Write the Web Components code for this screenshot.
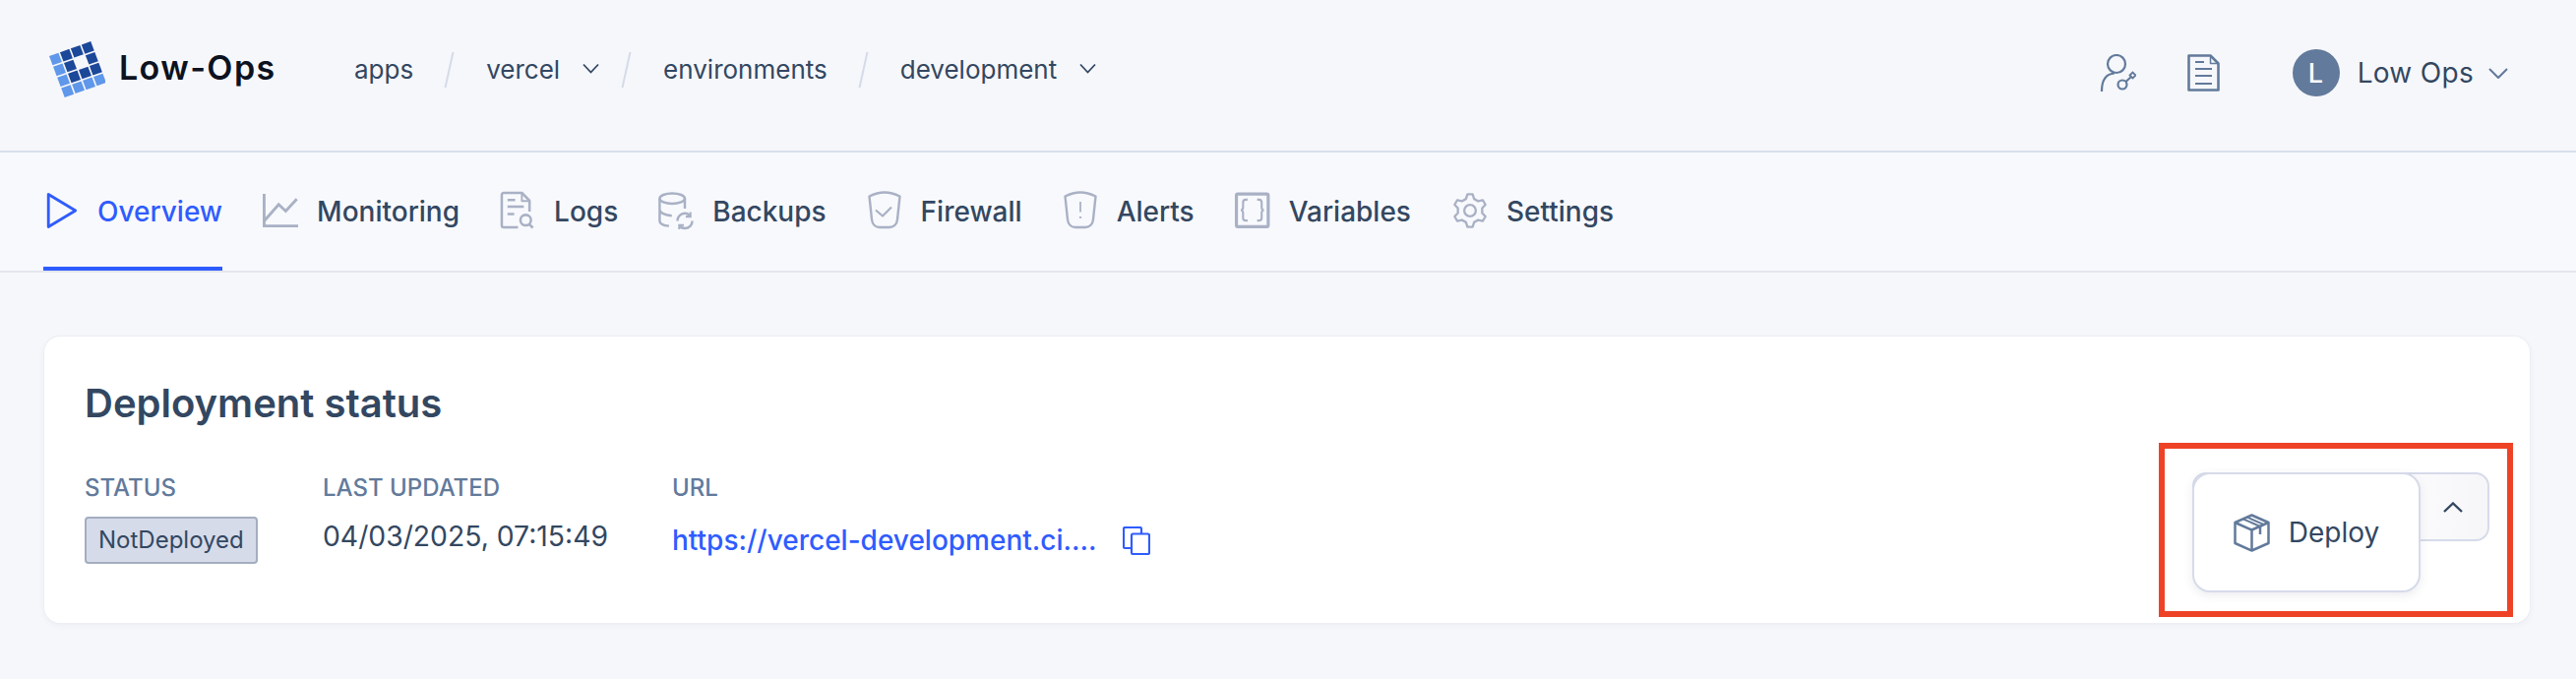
<!DOCTYPE html>
<html>
<head>
<meta charset="utf-8">
<style>
  html, body { margin: 0; background: #f6f7fb; }
  body { font-family: Inter, "Liberation Sans", sans-serif; color: #334761; }
  svg { display: block; }
</style>
</head>
<body>

<template id="lo-app-tpl">
  <style>
    :host { display: block; width: 2618px; height: 690px; overflow: hidden; position: relative; }
    main { padding: 65px 47px 0 45px; }
  </style>
  <slot name="header"></slot>
  <slot name="tabs"></slot>
  <main><slot></slot></main>
</template>

<template id="lo-header-tpl">
  <style>
    :host { display: flex; align-items: center; height: 153px; padding: 0 69px 0 49px; border-bottom: 2px solid #d8deeb; }
    .logo { display: flex; align-items: center; gap: 14px; width: 311px; font-weight: 600; font-size: 34px; color: #0c1220; letter-spacing: 1.400px; padding-bottom: 13px; }
    .crumbs { display: flex; align-items: center; flex: 1; padding-bottom: 12px; }
    .right { display: flex; align-items: center; padding-bottom: 5px; }
  </style>
  <div class="logo"><slot name="logo"></slot></div>
  <div class="crumbs"><slot name="crumbs"></slot></div>
  <div class="right"><slot name="right"></slot></div>
</template>

<template id="lo-crumb-tpl">
  <style>
    :host { display: flex; align-items: center; font-size: 26px; color: #334761; }
    .sep { width: 11px; height: 38px; margin: 0 32px 0 31px; }
    .chev { margin-left: 23px; margin-top: -2px; }
    :host(:not([menu])) .chev { display: none; }
    :host([menu]) .sep { margin-left: 22px; }
    :host([last]) .sep { display: none; }
  </style>
  <span><slot></slot></span>
  <svg class="chev" width="17" height="11" viewBox="0 0 17 11" fill="none" stroke="#334761" stroke-width="1.800"><path d="M1 1.500 8.500 9.500 16 1.500"/></svg>
  <svg class="sep" viewBox="0 0 11 38" fill="none" stroke="#d5dbe8" stroke-width="2"><path d="M9.500 1 1.500 37"/></svg>
</template>

<template id="lo-user-tpl">
  <style>
    :host { display: flex; align-items: center; font-size: 28px; letter-spacing: .3px; color: #334761; padding-left: 74px; }
    .av { width: 48px; height: 48px; border-radius: 50%; background: #627a9b; color: #fff; display: flex; align-items: center; justify-content: center; font-weight: 500; font-size: 27px; margin-right: 18px; }
    svg { margin-left: 15px; }
  </style>
  <div class="av">L</div>
  <span><slot></slot></span>
  <svg width="20" height="11" viewBox="0 0 20 11" fill="none" stroke="#627a9b" stroke-width="2"><path d="M1 1l9 9 9-9"/></svg>
</template>

<template id="lo-tabs-tpl">
  <style>
    :host { display: flex; gap: 41px; height: 120px; padding-left: 44px; border-bottom: 2px solid #e3e6ee; background: #f8f9fc; }
  </style>
  <slot></slot>
</template>

<template id="lo-tab-tpl">
  <style>
    :host { display: flex; align-items: center; gap: 19px; font-size: 28px; font-weight: 500; color: #334761; box-sizing: border-box; height: 120px; border-bottom: 4px solid transparent; }
    :host([active]) { color: #2f5cff; border-bottom-color: #2f5cff; }
    .ic { display: flex; width: 36px; padding-top: 2px; }
    span { padding-top: 4px; }
  </style>
  <div class="ic"><slot name="icon"></slot></div>
  <span><slot></slot></span>
</template>

<template id="lo-card-tpl">
  <style>
    :host { display: flex; justify-content: space-between; box-sizing: border-box; height: 291px; background: #fff; border-radius: 16px; padding: 46px 41px 0 41px; box-shadow: 0 0 0 1px #eceef4, 0 2px 6px rgba(60,70,100,.06); position: relative; }
    h2 { margin: 0 0 52px; font-size: 40px; line-height: 44px; font-weight: 600; color: #334761; }
    .fields { display: flex; }
    .actions { display: flex; margin-top: 92px; }
  </style>
  <div>
    <h2><slot name="title"></slot></h2>
    <div class="fields"><slot name="fields"></slot></div>
  </div>
  <div class="actions"><slot name="actions"></slot></div>
</template>

<template id="lo-field-tpl">
  <style>
    :host { display: block; }
    .lb { font-size: 24px; line-height: 24px; font-weight: 500; color: #627a9b; margin-bottom: 17px; }
    .val { display: flex; align-items: center; font-size: 28px; line-height: 32px; color: #334761; min-height: 48px; }
  </style>
  <div class="lb"><slot name="label"></slot></div>
  <div class="val"><slot></slot></div>
</template>

<template id="lo-badge-tpl">
  <style>
    :host { display: inline-block; box-sizing: border-box; height: 48px; line-height: 44px; padding: 0 12px; font-size: 24px; color: #334761; background: #d5dbe9; border: 2px solid #a4adc0; border-radius: 4px; }
  </style>
  <slot></slot>
</template>

<template id="lo-split-tpl">
  <style>
    :host { display: block; position: relative; width: 302px; height: 70px; }
    .toggle { position: absolute; inset: 0; box-sizing: border-box; border: 2px solid #d6dbea; border-radius: 14px; background: linear-gradient(90deg, #fff 55%, #f6f6f9); display: flex; align-items: center; justify-content: flex-end; padding-right: 25px; }
    .menu { position: absolute; left: 0; top: 0; width: 232px; height: 122px; box-sizing: border-box; border: 2px solid #d6dbea; border-radius: 18px; background: #fff; box-shadow: 0 3px 10px rgba(60,70,100,.1); display: flex; align-items: center; justify-content: center; gap: 19px; font-size: 28px; color: #334761; }
  </style>
  <div class="toggle">
    <svg width="20" height="11" viewBox="0 0 20 11" fill="none" stroke="#334761" stroke-width="2.400"><path d="M1 10l9-8.500 9 8.500"/></svg>
  </div>
  <div class="menu"><slot name="icon"></slot><span><slot></slot></span></div>
</template>

<template id="lo-mark-tpl">
  <style>
    :host { position: absolute; left: 2194px; top: 450px; width: 360px; height: 177px; box-sizing: border-box; border: 6px solid #ee4227; }
  </style>
</template>

<lo-app>
  <lo-header slot="header">
    <svg slot="logo" width="58" height="58" viewBox="0 0 58 58">
      <g transform="translate(1 16) rotate(-19.500) skewX(1)">
        <g fill="#5f97ea">
          <rect x="0" y="0" width="10" height="10"/><rect x="0" y="11.600" width="10" height="10"/><rect x="0" y="23.200" width="10" height="10"/><rect x="0" y="34.800" width="10" height="10"/>
          <rect x="11.600" y="34.800" width="10" height="10"/><rect x="23.200" y="34.800" width="10" height="10"/><rect x="34.800" y="34.800" width="10" height="10"/>
        </g>
        <g fill="#1c4899">
          <rect x="11.600" y="0" width="10" height="10"/><rect x="23.200" y="0" width="10" height="10"/><rect x="34.800" y="0" width="10" height="10"/>
          <rect x="11.600" y="11.600" width="10" height="10"/><rect x="34.800" y="11.600" width="10" height="10"/>
          <rect x="11.600" y="23.200" width="10" height="10"/><rect x="23.200" y="23.200" width="10" height="10"/><rect x="34.800" y="23.200" width="10" height="10"/>
        </g>
      </g>
    </svg>
    <span slot="logo" style="margin-top:-4px">Low-Ops</span>
    <lo-crumb slot="crumbs">apps</lo-crumb>
    <lo-crumb slot="crumbs" menu>vercel</lo-crumb>
    <lo-crumb slot="crumbs">environments</lo-crumb>
    <lo-crumb slot="crumbs" menu last>development</lo-crumb>
    <svg slot="right" width="37" height="38" viewBox="0 0 37 38" fill="none" stroke="#627a9b" stroke-width="2.200" style="margin-right:52px">
      <circle cx="17" cy="10" r="9"/>
      <path d="M2 38c0-11 4-18 13-18.500"/>
      <circle cx="23" cy="31" r="4.500"/>
      <path d="M26.500 28l6-5.500"/>
      <path d="M30.500 21.500l3-3 3 3-3 3z" stroke-width="1.800"/>
    </svg>
    <svg slot="right" width="33" height="38" viewBox="0 0 33 38" fill="none" stroke="#627a9b" stroke-width="2.600" stroke-linejoin="round">
      <path d="M1.500 1.500h22l8 8v27h-30z"/>
      <path d="M23.500 1.500v8h8" stroke-width="1.500"/>
      <path d="M8 8h9M8 15h17M8 22h17M8 30h17" stroke-width="2.200"/>
    </svg>
    <lo-user slot="right">Low Ops</lo-user>
  </lo-header>

  <lo-tabs slot="tabs">
    <lo-tab active>
      <svg slot="icon" width="38" height="40" viewBox="0 0 38 40" fill="none" stroke="#2f5cff" stroke-width="3" stroke-linejoin="round"><path d="M5.500 2.500v35l29-17.500z"/></svg>
      Overview
    </lo-tab>
    <lo-tab>
      <svg slot="icon" width="40" height="40" viewBox="0 0 40 40" fill="none" stroke="#a9b1c5" stroke-width="3.200"><path d="M1.600 1v36.400H40"/><path d="M1.500 32 18 13l8 7.500L38.500 7"/></svg>
      Monitoring
    </lo-tab>
    <lo-tab>
      <svg slot="icon" width="37" height="40" viewBox="0 0 37 40" fill="none" stroke="#a9b1c5" stroke-width="2.600" stroke-linejoin="round"><path d="M19 37.500H4a2 2 0 0 1-2-2V3.500a2 2 0 0 1 2-2h19l8 8V21"/><path d="M23 2v8h8" stroke-width="2"/><path d="M8 9h8M8 16h17M8 23.500h7"/><circle cx="27" cy="30" r="5.500"/><path d="M31 34.500l3.500 3.500"/></svg>
      Logs
    </lo-tab>
    <lo-tab>
      <svg slot="icon" width="38" height="40" viewBox="0 0 38 40" fill="none" stroke="#a9b1c5" stroke-width="2.600"><ellipse cx="15" cy="7" rx="13.500" ry="5.500"/><path d="M1.500 7v24c0 3 5 5 10 5.500M28.500 7v11M1.500 19c0 3.500 6 6 13 6.500"/><path d="M20.500 31c0-4.500 3.500-8 8-8 2.500 0 4.500 1 5.500 3M36.500 31c0 4.500-3.500 8-8 8-2.500 0-4.500-1-5.500-3"/><path d="M34.500 21.500v5h-5M22.500 40v-4.500h5" stroke-width="2.200"/></svg>
      Backups
    </lo-tab>
    <lo-tab>
      <svg slot="icon" width="36" height="40" viewBox="0 0 36 40" fill="none" stroke="#a9b1c5" stroke-width="2.400" stroke-linejoin="round"><path d="M18 1.500c5 0 10.500 1.500 15.500 4L31 29c-.5 5-4 8-8 8H13c-4 0-7.500-3-8-8L2.500 5.500c5-2.500 10.500-4 15.500-4z"/><path d="M9 19.500l7 6 9-9" stroke-width="2.200"/></svg>
      Firewall
    </lo-tab>
    <lo-tab>
      <svg slot="icon" width="36" height="40" viewBox="0 0 36 40" fill="none" stroke="#a9b1c5" stroke-width="2.400" stroke-linejoin="round"><path d="M18 1.500c5 0 10.500 1.500 15.500 4L31 29c-.5 5-4 8-8 8H13c-4 0-7.500-3-8-8L2.500 5.500c5-2.500 10.500-4 15.500-4z"/><path d="M18 11v10.500" stroke-width="1.800"/><path d="M18 26v1.800" stroke-width="2.200"/></svg>
      Alerts
    </lo-tab>
    <lo-tab>
      <svg slot="icon" width="39" height="40" viewBox="0 0 39 40" fill="none" stroke="#a9b1c5" stroke-width="3.400"><rect x="1.700" y="1.700" width="35" height="36" rx="1.500"/><path d="M14 8h-2c-2 0-3 1-3 3v5.500c0 2-1 3-2.500 3 1.500 0 2.500 1 2.500 3V28c0 2 1 3 3 3h2M24.500 8h2c2 0 3 1 3 3v5.500c0 2 1 3 2.500 3-1.500 0-2.500 1-2.500 3V28c0 2-1 3-3 3h-2" stroke-width="2.300"/></svg>
      Variables
    </lo-tab>
    <lo-tab style="margin-left:1px">
      <svg slot="icon" width="40" height="40" viewBox="0 0 40 40" fill="none" stroke="#a9b1c5" stroke-width="2.600" stroke-linejoin="round"><circle cx="20" cy="20" r="6.500"/><path id="gear"/></svg>
      Settings
    </lo-tab>
  </lo-tabs>

  <lo-card>
    <span slot="title">Deployment status</span>
    <lo-field slot="fields" style="width:242px">
      <span slot="label">STATUS</span>
      <lo-badge>NotDeployed</lo-badge>
    </lo-field>
    <lo-field slot="fields" style="width:355px">
      <span slot="label">LAST UPDATED</span>
      <span style="margin-top:-8px;font-size:28.300px">04/03/2025, 07:15:49</span>
    </lo-field>
    <lo-field slot="fields">
      <span slot="label">URL</span>
      <span style="color:#2f5cff;font-weight:500">https://vercel-development.ci....</span>
      <svg width="28" height="29" viewBox="0 0 28 29" fill="none" stroke="#2f5cff" stroke-width="2.200" style="margin-left:27px"><path d="M19 7V2.500A1.500 1.500 0 0 0 17.500 1h-15A1.500 1.500 0 0 0 1 2.500v18A1.500 1.500 0 0 0 2.500 22H9"/><rect x="9" y="7.500" width="18" height="20.500" rx="1.500"/></svg>
    </lo-field>
    <lo-split slot="actions">
      <svg slot="icon" width="37" height="39" viewBox="0 0 37 39" fill="none" stroke="#627a9b" stroke-width="2.500" stroke-linejoin="round"><path d="M18.500 1.500 35.500 9v21l-17 7.500L1.500 30V9z"/><path d="M1.500 9l17 7.500L35.500 9M18.500 16.500v21"/><path d="M10 5.500l17 7.500M14 3.700l17 7.500" stroke-width="2"/><path d="M27 13v8" stroke-width="2.500"/></svg>
      Deploy
    </lo-split>
  </lo-card>

  <lo-mark></lo-mark>
</lo-app>

<script>
// every element just clones its template into an open shadow root
function define(tag) {
  const tpl = document.getElementById(tag + '-tpl');
  customElements.define(tag, class extends HTMLElement {
    constructor() {
      super();
      this.attachShadow({ mode: 'open' }).appendChild(tpl.content.cloneNode(true));
    }
  });
}
['lo-app', 'lo-header', 'lo-crumb', 'lo-user', 'lo-tabs', 'lo-tab', 'lo-card', 'lo-field', 'lo-badge', 'lo-split', 'lo-mark'].forEach(define);

// six tooth gear outline for the settings tab
const pts = [];
for (let i = 0; i < 6; i++) {
  const a = -90 + i * 60;
  [[-19, 14], [-9, 18.6], [9, 18.6], [19, 14]].forEach(([da, r]) => {
    const t = (a + da) * Math.PI / 180;
    pts.push((20 + r * Math.cos(t)).toFixed(1) + ' ' + (20 + r * Math.sin(t)).toFixed(1));
  });
}
document.getElementById('gear').setAttribute('d', 'M' + pts.join('L') + 'z');
</script>
</body>
</html>
